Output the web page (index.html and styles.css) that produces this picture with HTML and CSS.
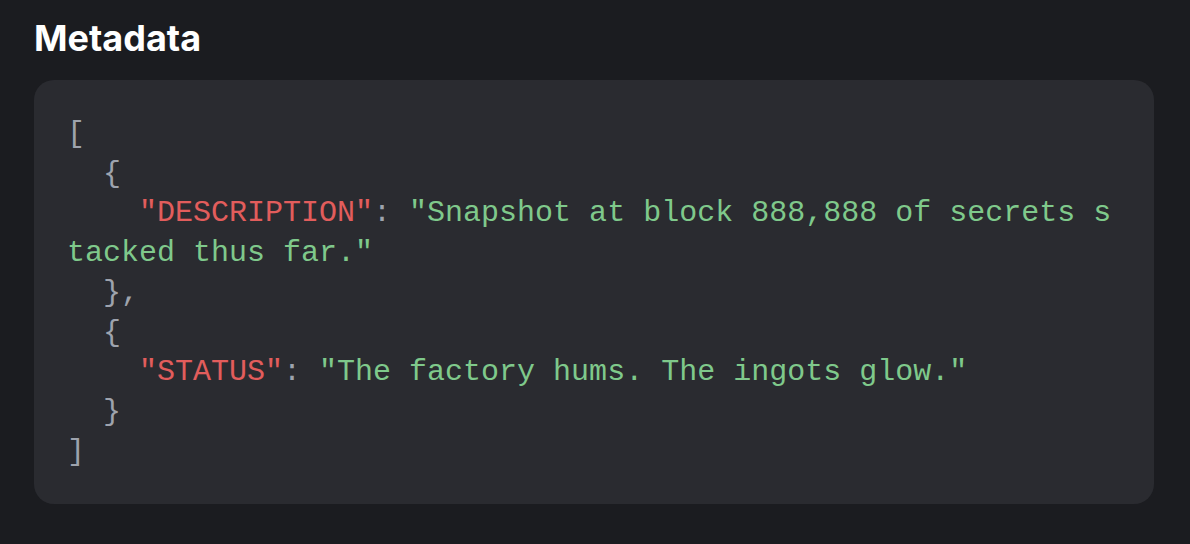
FILE: index.html
```html
<!DOCTYPE html>
<html lang="en">
<head>
<meta charset="utf-8">
<title>Metadata</title>
<link rel="stylesheet" href="styles.css">
</head>
<body>
<section class="metadata">
<h2 class="title">Metadata</h2>
<pre class="code"><span class="p">[</span>
<span class="p">  {</span>
    <span class="k">"DESCRIPTION"</span><span class="p">:</span> <span class="s">"Snapshot at block 888,888 of secrets stacked thus far."</span>
<span class="p">  },</span>
<span class="p">  {</span>
    <span class="k">"STATUS"</span><span class="p">:</span> <span class="s">"The factory hums. The ingots glow."</span>
<span class="p">  }</span>
<span class="p">]</span></pre>
</section>
</body>
</html>
```

FILE: styles.css
```css
html, body {
  margin: 0;
  padding: 0;
  background: #1b1c20;
}

body {
  width: 1190px;
  height: 544px;
  overflow: hidden;
}

.metadata {
  padding: 15px 36px 0 34px;
}

.title {
  margin: 0 0 19px 0;
  font-family: Inter, "Liberation Sans", sans-serif;
  font-weight: 700;
  font-size: 36px;
  line-height: 46px;
  color: #ffffff;
  letter-spacing: 0;
}

.code {
  margin: 0;
  padding: 35px 33px 32px 33px;
  background: #2a2b30;
  border-radius: 20px;
  font-family: "Liberation Mono", "Courier New", monospace;
  font-size: 30px;
  line-height: 39.7px;
  color: #9ea3ad;
  white-space: pre-wrap;
  word-break: break-all;
}

.p { color: #9ea3ad; }
.k { color: #e25d5c; }
.s { color: #7fc98b; }
```
